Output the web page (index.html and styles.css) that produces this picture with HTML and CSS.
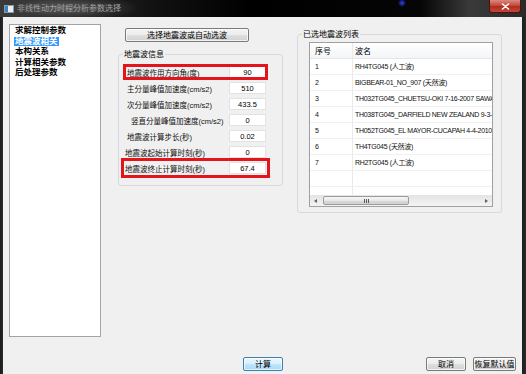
FILE: index.html
```html
<!DOCTYPE html>
<html lang="zh">
<head>
    <meta charset="UTF-8">
    <meta name="viewport" content="width=device-width, initial-scale=1.0">
    <title>非线性动力时程分析参数选择</title>
    <link rel="stylesheet" href="styles.css">
</head>
<body>
    <div class="window">
        <div class="titlebar">
            <svg class="app-icon" width="10" height="8" viewBox="0 0 10 8">
                <rect x="0.5" y="0.5" width="9" height="7" fill="#e8eef2" stroke="#8a9aa6"/>
                <rect x="1" y="1" width="3" height="6" fill="#3d7fc4"/>
            </svg>
            <span class="title">非线性动力时程分析参数选择</span>
            <div class="close-btn">
                <svg width="9" height="7" viewBox="0 0 9 7">
                    <path d="M1.5 1 L7.5 6 M7.5 1 L1.5 6" stroke="#fff" stroke-width="1.6" stroke-linecap="round"/>
                </svg>
            </div>
        </div>

        <div class="client">
            <div class="main">
                <ul class="tree">
                    <li>求解控制参数</li>
                    <li><span class="sel">地震波相关</span></li>
                    <li>本构关系</li>
                    <li>计算相关参数</li>
                    <li>后处理参数</li>
                </ul>

                <div class="mid">
                    <button class="btn btn-pick">选择地震波或自动选波</button>
                    <fieldset class="group wave-info">
                        <legend>地震波信息</legend>
                        <div class="row marked">
                            <label>地震波作用方向角(度)</label>
                            <input type="text" value="90">
                        </div>
                        <div class="row">
                            <label>主分量峰值加速度(cm/s2)</label>
                            <input type="text" value="510">
                        </div>
                        <div class="row">
                            <label>次分量峰值加速度(cm/s2)</label>
                            <input type="text" value="433.5">
                        </div>
                        <div class="row">
                            <label class="indent">竖直分量峰值加速度(cm/s2)</label>
                            <input type="text" value="0">
                        </div>
                        <div class="row">
                            <label>地震波计算步长(秒)</label>
                            <input type="text" value="0.02">
                        </div>
                        <div class="row">
                            <label class="outdent">地震波起始计算时刻(秒)</label>
                            <input type="text" value="0">
                        </div>
                        <div class="row marked marked-wide">
                            <label class="outdent">地震波终止计算时刻(秒)</label>
                            <input type="text" value="67.4">
                        </div>
                    </fieldset>
                </div>

                <div class="side">
                    <fieldset class="group wave-list">
                        <legend>已选地震波列表</legend>
                        <div class="listview">
                            <div class="list-body">
                                <table>
                                    <colgroup>
                                        <col class="col-no">
                                        <col>
                                    </colgroup>
                                    <thead>
                                        <tr><th>序号</th><th>波名</th></tr>
                                    </thead>
                                    <tbody>
                                        <tr><td>1</td><td>RH4TG045 (人工波)</td></tr>
                                        <tr><td>2</td><td>BIGBEAR-01_NO_907 (天然波)</td></tr>
                                        <tr><td>3</td><td>TH032TG045_CHUETSU-OKI 7-16-2007 SAWADA (天然波)</td></tr>
                                        <tr><td>4</td><td>TH038TG045_DARFIELD NEW ZEALAND 9-3-2010 (天然波)</td></tr>
                                        <tr><td>5</td><td>TH052TG045_EL MAYOR-CUCAPAH 4-4-2010 (天然波)</td></tr>
                                        <tr><td>6</td><td>TH4TG045 (天然波)</td></tr>
                                        <tr><td>7</td><td>RH2TG045 (人工波)</td></tr>
                                        <tr><td></td><td></td></tr>
                                        <tr><td></td><td></td></tr>
                                    </tbody>
                                </table>
                            </div>
                            <div class="hscroll">
                                <span class="arrow-l"></span>
                                <span class="thumb"><span class="grip"></span></span>
                                <span class="arrow-r"></span>
                            </div>
                        </div>
                    </fieldset>
                </div>
            </div>

            <div class="footer">
                <button class="btn btn-default btn-calc">计算</button>
                <button class="btn btn-cancel">取消</button>
                <button class="btn btn-reset">恢复默认值</button>
            </div>
        </div>
    </div>
</body>
</html>
```

FILE: styles.css
```css
* {
    box-sizing: border-box;
}

body {
    margin: 0;
    overflow: hidden;
    background: #f8f8f8;
    font-family: "Liberation Sans", "Noto Sans CJK SC", sans-serif;
    color: #000;
}

.window {
    width: 526px;
    height: 374px;
    display: flex;
    flex-direction: column;
    background: linear-gradient(to right, #1a1a1a 0, #2c2c2c 3px, #161616 520px, #2a2a2a 526px);
}

/* title bar */
.titlebar {
    height: 17px;
    display: flex;
    align-items: center;
    background:
        radial-gradient(ellipse 75px 13px at 64px 8px, rgba(95, 95, 95, 0.95), rgba(60, 60, 60, 0.5) 70%, rgba(0, 0, 0, 0) 100%),
        radial-gradient(circle at 402px 3px, #2f3dff 0, rgba(47, 61, 255, 0.5) 2px, rgba(0, 0, 0, 0) 4px),
        linear-gradient(to right, #3a3a3a 0, #121212 150px, #000 250px, #050505 420px, #3a3a3a 470px, #2a2a2a 526px);
}

.app-icon {
    margin-left: 4px;
    margin-top: 1px;
}

.title {
    margin-left: 3px;
    font-size: 8px;
    line-height: 10px;
    color: #a2a2a2;
}

.close-btn {
    align-self: flex-start;
    margin-left: auto;
    margin-right: 5px;
    width: 32px;
    height: 13px;
    border: 1px solid #4a1410;
    border-top: none;
    border-radius: 0 0 3px 3px;
    background: linear-gradient(#d98a80 0, #c6493c 45%, #b02d1f 55%, #c4473a 100%);
    display: flex;
    align-items: center;
    justify-content: center;
}

/* client area */
.client {
    flex: 1;
    margin: 0 4px 0 3px;
    background: #f0f0f0;
    display: flex;
    flex-direction: column;
    font-family: "Liberation Sans", "Noto Sans CJK SC", sans-serif;
}

.main {
    display: flex;
    align-items: flex-start;
}

.tree {
    list-style: none;
    margin: 7px 0 0 6px;
    padding: 0 0 0 5px;
    width: 92px;
    height: 313px;
    border: 1px solid #a3a3a3;
    background: #fff;
    font-size: 8.5px;
    font-weight: bold;
    line-height: 10.5px;
}

.tree li {
    white-space: nowrap;
}

.tree .sel {
    display: inline-block;
    padding: 0 1px;
    margin-left: -1px;
    line-height: 9px;
    background: #3399ff;
    color: #fff;
}

.mid {
    margin-left: 17px;
    width: 165px;
    padding-top: 11px;
}

.side {
    margin-left: 14px;
    width: 205px;
    padding-top: 12px;
}

/* buttons */
.btn {
    display: block;
    height: 14px;
    padding: 0;
    border: 1px solid #7a7a7a;
    border-radius: 2px;
    background: linear-gradient(#f4f4f4 0, #ececec 48%, #dedede 52%, #d2d2d2 100%);
    box-shadow: inset 0 0 0 1px rgba(255, 255, 255, 0.7);
    font-family: "Noto Sans CJK SC", sans-serif;
    font-size: 8px;
    line-height: 12px;
    color: #000;
}

.btn-pick {
    margin-left: 7px;
    width: 124px;
}

.btn-default {
    border-color: #3c7fb1;
    background: linear-gradient(#eaf6fd 0, #d9f0fc 48%, #bee6fd 52%, #a7d9f5 100%);
}

/* group boxes */
.group {
    margin: 0;
    min-width: 0;
    border: 1px solid #d5d9dd;
    border-radius: 3px;
}

.group legend {
    padding: 0 1px;
    font-family: "Noto Sans CJK SC", sans-serif;
    font-size: 8px;
    line-height: 10px;
}

.wave-info {
    margin-top: 7px;
    padding: 5px 14px 9px 4px;
}

.row {
    display: flex;
    align-items: center;
    height: 16px;
}

.row label {
    flex: 1;
    padding-left: 4px;
    font-size: 7.5px;
    white-space: nowrap;
    color: #111;
}

.row label.indent {
    padding-left: 8px;
}

.row label.outdent {
    padding-left: 2px;
}

.row input {
    width: 37px;
    height: 12px;
    margin-right: 2px;
    padding: 0;
    border: 1px solid #e2e2e2;
    background: #fff;
    font-family: "Liberation Sans", sans-serif;
    font-size: 7.5px;
    text-align: center;
    color: #000;
}

.marked {
    outline: 3px solid #e3141c;
    outline-offset: -3px;
}

.marked-wide {
    outline-offset: -1px;
}

.wave-list {
    width: 205px;
    padding: 3px 8px 5px 11px;
}

.wave-list legend {
    margin-left: -7px;
}

/* list view */
.listview {
    width: 184px;
    height: 165px;
    border: 1px solid #a0a0a0;
    background: #fff;
}

.list-body {
    height: 152px;
    overflow: hidden;
}

.list-body table {
    width: 330px;
    table-layout: fixed;
    border-collapse: separate;
    border-spacing: 0;
}

.col-no {
    width: 43px;
}

.list-body th,
.list-body td {
    padding: 0 0 0 2px;
    line-height: 15px;
    height: 16px;
    text-align: left;
    white-space: nowrap;
    overflow: hidden;
    border-bottom: 1px solid #f0f0f0;
}

.list-body th {
    font-family: "Noto Sans CJK SC", sans-serif;
    font-weight: normal;
    font-size: 8px;
    background: linear-gradient(#ffffff, #f4f5f7);
    border-bottom-color: #e3e6ea;
}

.list-body td {
    font-size: 7px;
    letter-spacing: -0.3px;
    color: #111;
}

.list-body th:first-child,
.list-body td:first-child {
    padding-left: 5px;
    border-right: 1px solid #eaeaea;
}

/* horizontal scroll bar */
.hscroll {
    height: 11px;
    display: flex;
    align-items: center;
    background: linear-gradient(#e4e4e4, #f3f3f3);
}

.arrow-l,
.arrow-r {
    width: 0;
    height: 0;
    border-top: 2px solid transparent;
    border-bottom: 2px solid transparent;
}

.arrow-l {
    margin-left: 4px;
    border-right: 3px solid #606060;
}

.arrow-r {
    margin-left: auto;
    margin-right: 4px;
    border-left: 3px solid #606060;
}

.thumb {
    margin-left: 6px;
    width: 86px;
    height: 9px;
    border: 1px solid #9b9b9b;
    border-radius: 2px;
    background: linear-gradient(#f6f6f6 0, #e9e9e9 50%, #d9d9d9 51%, #d2d2d2 100%);
    display: flex;
    align-items: center;
    justify-content: center;
}

.grip {
    width: 5px;
    height: 4px;
    background: linear-gradient(to right, #5a5a5a 1px, transparent 1px);
    background-size: 2px 4px;
}

/* bottom buttons */
.footer {
    margin-top: auto;
    padding-bottom: 3px;
    display: flex;
}

.btn-calc {
    margin-left: 240px;
    width: 40px;
}

.btn-cancel {
    margin-left: auto;
    width: 40px;
}

.btn-reset {
    margin-left: 7px;
    margin-right: 6px;
    width: 43px;
}
```
